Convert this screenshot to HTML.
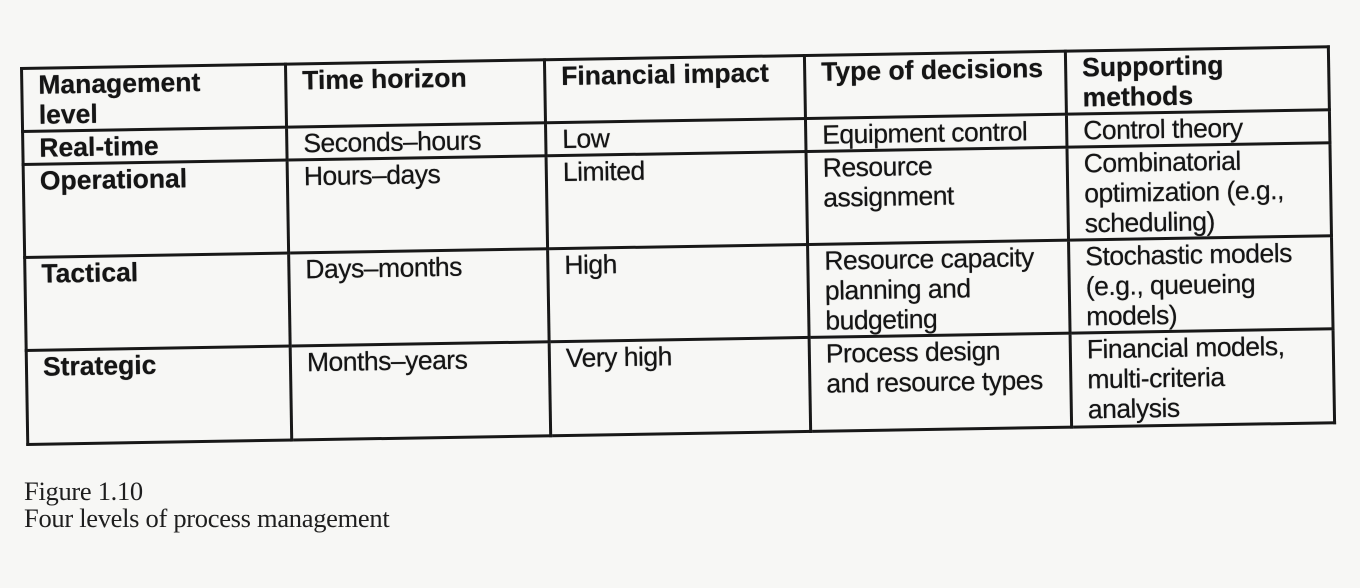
<!DOCTYPE html>
<html><head><meta charset="utf-8"><style>
html,body{margin:0;padding:0;}
body{width:1360px;height:588px;background:#f7f7f5;position:relative;overflow:hidden;}
.wrap{position:absolute;left:20px;top:67px;transform-origin:0 0;transform:rotate(-0.95deg);}
table{border-collapse:collapse;table-layout:fixed;font-family:"Liberation Sans",Arial,sans-serif;color:#151515;}
td{border:3px solid #181818;vertical-align:top;padding:0 4px 0 15px;font-size:26.5px;line-height:30px;overflow:visible;white-space:nowrap;letter-spacing:-0.5px;text-shadow:0 0 0.6px #222;}
tr.h td{font-weight:bold;font-size:26.5px;letter-spacing:0px;}
td.b{font-weight:bold;font-size:26.5px;letter-spacing:0px;}
.cap{position:absolute;left:24px;font-family:"Liberation Serif","Times New Roman",serif;font-size:26.5px;color:#1e1e1e;letter-spacing:-0.3px;}
</style></head><body>
<div class="wrap">
<table>
<colgroup><col style="width:264px"><col style="width:259px"><col style="width:260px"><col style="width:261px"><col style="width:263px"></colgroup>
<tr class="h" style="height:60px"><td>Management<br>level</td><td>Time horizon</td><td>Financial impact</td><td>Type of decisions</td><td>Supporting<br>methods</td></tr>
<tr style="height:32px"><td class="b">Real-time</td><td>Seconds–hours</td><td>Low</td><td>Equipment control</td><td>Control theory</td></tr>
<tr style="height:93px"><td class="b">Operational</td><td>Hours–days</td><td>Limited</td><td>Resource<br>assignment</td><td>Combinatorial<br>optimization (e.g.,<br>scheduling)</td></tr>
<tr style="height:92px"><td class="b">Tactical</td><td>Days–months</td><td>High</td><td>Resource capacity<br>planning and<br>budgeting</td><td>Stochastic models<br>(e.g., queueing<br>models)</td></tr>
<tr style="height:94px"><td class="b">Strategic</td><td>Months–years</td><td>Very high</td><td>Process design<br>and resource types</td><td>Financial models,<br>multi-criteria<br>analysis</td></tr>
</table>
</div>
<div class="cap" style="top:476px;">Figure 1.10</div>
<div class="cap" style="top:503px;">Four levels of process management</div>
</body></html>
